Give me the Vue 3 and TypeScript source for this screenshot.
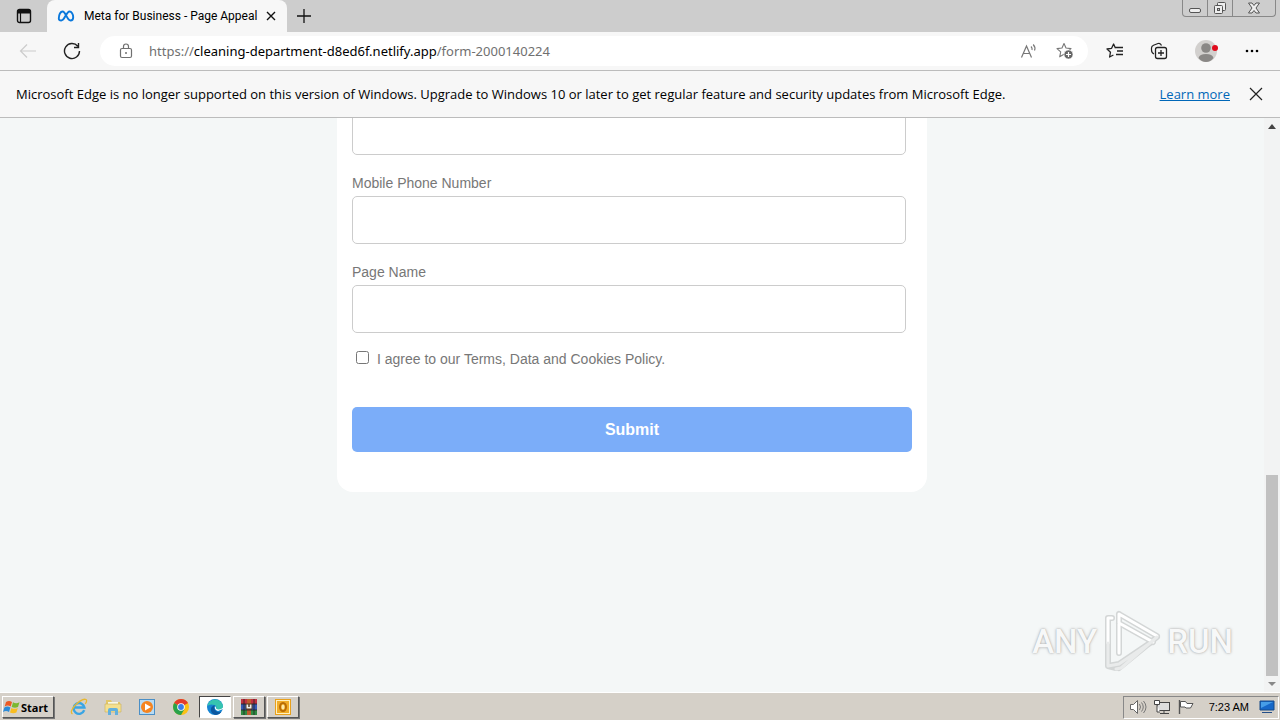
<script setup lang="ts">
import { ref } from 'vue'

interface Field {
  id: string
  label: string
}

const fields: Field[] = [
  { id: 'phone', label: 'Mobile Phone Number' },
  { id: 'page', label: 'Page Name' },
]
const values = ref<Record<string, string>>({ email: '', phone: '', page: '' })
const agreed = ref(false)
</script>

<template>
  <div class="screen">
    <header class="tabs">
      <button class="plain tab-actions" aria-label="Tab actions">
        <svg width="16" height="16" viewBox="0 0 16 16"><rect x="1.5" y="1.5" width="13" height="13" rx="2" fill="none" stroke="#111" stroke-width="1.4" /><path d="M1.5 2h13v3.500h-13z" fill="#111" /><path d="M4.500 5v9" stroke="#111" stroke-width="1.200" /></svg>
      </button>
      <div class="tab">
        <svg width="18" height="14" viewBox="0 0 18 14"><path d="M1.800 9.500C1.800 5.500 3.500 2.500 5.600 2.500 8.800 2.500 10 11.500 13.500 11.500c2 0 2.700-1.500 2.700-3.300 0-3.200-1.700-5.700-3.700-5.700C9.300 2.500 7.800 11.500 4.200 11.500c-1.600 0-2.400-.8-2.400-2z" fill="none" stroke="#0a78dc" stroke-width="1.900" /></svg>
        <span class="tab-title">Meta for Business - Page Appeal</span>
        <button class="plain" aria-label="Close tab">
          <svg width="12" height="12" viewBox="0 0 12 12"><path d="M2 2l8 8M10 2l-8 8" stroke="#111" stroke-width="1.400" /></svg>
        </button>
      </div>
      <button class="plain new-tab" aria-label="New tab">
        <svg width="16" height="16" viewBox="0 0 16 16"><path d="M8 1v14M1 8h14" stroke="#111" stroke-width="1.300" /></svg>
      </button>
      <div class="window-buttons">
        <button aria-label="Minimize"><svg width="14" height="14" viewBox="0 0 14 14"><rect x="1.500" y="7.500" width="11" height="4" rx="1.500" fill="#eee" stroke="#555" /></svg></button>
        <button aria-label="Restore"><svg width="14" height="14" viewBox="0 0 14 14"><rect x="4.500" y="1.500" width="8" height="8" rx="1" fill="#eee" stroke="#555" /><rect x="1.500" y="4.500" width="8" height="8" rx="1" fill="#eee" stroke="#555" /><rect x="4.500" y="7.500" width="2" height="2" fill="#ccc" stroke="#555" /></svg></button>
        <button class="wide" aria-label="Close"><svg width="14" height="12" viewBox="0 0 14 12"><path d="M1.500 1h3.500l2 2.500L9 1h3.500L9 6l3.500 5H9L7 8.500 5 11H1.500L5 6z" fill="#eee" stroke="#555" /></svg></button>
      </div>
    </header>

    <nav class="toolbar">
      <button class="plain" aria-label="Back"><svg width="18" height="16" viewBox="0 0 18 16"><path d="M17 8H2M8 1.500L1.500 8 8 14.500" fill="none" stroke="#ccc" stroke-width="1.200" /></svg></button>
      <button class="plain reload" aria-label="Refresh"><svg width="18" height="18" viewBox="0 0 18 18"><path d="M16.500 9A7.500 7.500 0 1 1 14.800 4.300M15.500 1v4.500H11" fill="none" stroke="#222" stroke-width="1.400" /></svg></button>
      <div class="address">
        <svg width="14" height="16" viewBox="0 0 14 16"><rect x="1.500" y="5.500" width="11" height="9" rx="1.500" fill="none" stroke="#707070" stroke-width="1.200" /><path d="M4.500 5.500V3.500a2.500 2.500 0 0 1 5 0v2" fill="none" stroke="#707070" stroke-width="1.200" /><circle cx="7" cy="10" r="1" fill="#707070" /></svg>
        <span class="url">https://<b>cleaning-department-d8ed6f.netlify.app</b>/form-2000140224</span>
        <button class="plain" aria-label="Read aloud"><svg width="18" height="16" viewBox="0 0 18 16"><path d="M1.500 14.500L6.500 3l5 11.500M3.300 10.500h6.400M11 3.500q1.500 1.500 1 3.500M13.200 1.500q2.700 3 1.300 6" fill="none" stroke="#777" stroke-width="1.200" /></svg></button>
        <button class="plain star" aria-label="Add to favorites"><svg width="18" height="18" viewBox="0 0 18 18"><path d="M8 1.500l2 4.500 5 .6-3.700 3.200 1 5L8 12.300l-4.300 2.500 1-5L1 6.600 6 6z" fill="none" stroke="#777" stroke-width="1.100" stroke-linejoin="round" /><circle cx="12.500" cy="12.500" r="4.500" fill="#666" stroke="#fff" stroke-width=".6" /><path d="M12.500 10v5M10 12.500h5" stroke="#fff" stroke-width="1.200" /></svg></button>
      </div>
      <div class="tools">
        <button class="plain" aria-label="Favorites"><svg width="18" height="18" viewBox="0 0 18 18"><path d="M9.500 6.300L7.600 2 5.600 6.300 1 7l3.500 3.200-.9 4.800 3.800-2M9 5.500h8M11 9h6M10 12.500h7" fill="none" stroke="#222" stroke-width="1.300" stroke-linejoin="round" /></svg></button>
        <button class="plain" aria-label="Collections"><svg width="18" height="18" viewBox="0 0 18 18"><path d="M4 12Q1.500 11 1.500 8V6Q1.500 4 3.500 3.200L8 1.500q2.500-.7 3.500 2" fill="none" stroke="#222" stroke-width="1.200" /><rect x="5.500" y="5.500" width="11" height="11" rx="2" fill="#f7f7f7" stroke="#222" stroke-width="1.300" /><path d="M11 8v6M8 11h6" stroke="#222" stroke-width="1.300" /></svg></button>
        <button class="plain" aria-label="Profile"><svg width="24" height="24" viewBox="0 0 24 24"><circle cx="12" cy="12" r="11" fill="#d2d0ce" /><circle cx="12" cy="9" r="4.800" fill="#8a8886" /><path d="M4.500 19q1-4 7.500-4t7.500 4q-3 4-7.500 4t-7.500-4z" fill="#8a8886" /><circle cx="21" cy="9" r="3" fill="#e00b1c" /></svg></button>
        <button class="plain" aria-label="Settings and more"><svg width="16" height="16" viewBox="0 0 16 16"><circle cx="3" cy="8" r="1.300" /><circle cx="8" cy="8" r="1.300" /><circle cx="13" cy="8" r="1.300" /></svg></button>
      </div>
    </nav>

    <section class="notice">
      <p>Microsoft Edge is no longer supported on this version of Windows. Upgrade to Windows 10 or later to get regular feature and security updates from Microsoft Edge.</p>
      <a href="#">Learn more</a>
      <button class="plain" aria-label="Dismiss"><svg width="14" height="14" viewBox="0 0 14 14"><path d="M1 1l12 12M13 1L1 13" stroke="#222" stroke-width="1.200" /></svg></button>
    </section>

    <div class="viewport">
      <main class="page">
        <form class="card" @submit.prevent>
          <input v-model="values.email" class="box" type="text" aria-label="Email" />
          <div v-for="f in fields" :key="f.id" class="field">
            <label :for="f.id">{{ f.label }}</label>
            <input :id="f.id" v-model="values[f.id]" class="box" type="text" />
          </div>
          <div class="agree">
            <input id="agree" v-model="agreed" type="checkbox" />
            <label for="agree">I agree to our Terms, Data and Cookies Policy.</label>
          </div>
          <button class="submit" type="submit">Submit</button>
        </form>
      </main>
      <div class="scrollbar">
        <svg width="16" height="16" viewBox="0 0 16 16"><path d="M4 11l4-5 4 5z" fill="#444" /></svg>
        <div class="track"><div class="thumb"></div></div>
        <svg width="16" height="16" viewBox="0 0 16 16"><path d="M4 6l4 4 4-4z" fill="#888" /></svg>
      </div>
      <div class="watermark">
        <span>ANY</span>
        <svg width="58" height="64" viewBox="0 0 58 64">
          <g fill="none" stroke-linejoin="round" stroke-linecap="round">
            <path d="M16 5v39M16 5l38 22M16 14l34 19M9 9H5v48l8 2M16 59L54 28M5 57l11-2 34-23" stroke="#d3d6d6" stroke-width="6" />
            <path d="M16 44V5l38 22M16 14l34 19M9 9H5v25" stroke="#fff" stroke-width="3" />
            <path d="M5 34v23l11-2 34-23M13 60l5-1 36-31" stroke="#e9ebeb" stroke-width="3" />
          </g>
        </svg>
        <span>RUN</span>
      </div>
    </div>

    <footer class="taskbar">
      <button class="start"><svg width="18" height="16" viewBox="0 0 18 16"><path d="M3 3q3-2 6 0L7.700 7.500q-3-2-6 0z" fill="#ec5a24" /><path d="M10 3.300q3 1.700 6.500 0L15 8q-3 1.600-6.300 0z" fill="#7bb830" /><path d="M1.400 8.500q3-2 6 0L6 13q-3-2-6 0z" fill="#2c8bd8" /><path d="M8.400 9q3 1.700 6.400 0l-1.400 4.500q-3 1.600-6.400 0z" fill="#f9bd20" /></svg>Start</button>
      <div class="launchers">
        <button class="task" aria-label="Internet Explorer"><svg width="18" height="18" viewBox="0 0 18 18"><path d="M14.200 12.200A5.400 5.400 0 1 1 14.400 9.500H5" fill="none" stroke="#3aa5e4" stroke-width="2.400" /><path d="M2.500 16Q-.5 14 4.500 8 12 0 16 1.500q1.500 1.200-.8 4.500" fill="none" stroke="#e8b830" stroke-width="1.300" /></svg></button>
        <button class="task" aria-label="File Explorer"><svg width="18" height="18" viewBox="0 0 18 18"><path d="M2 2h5l1 2h8v9H2z" fill="#e2c768" /><path d="M4 4h10v3H4z" fill="#f8f8e5" /><path d="M1 6h16v8H1z" fill="#f4e08f" stroke="#cbb05a" stroke-width=".6" /><path d="M4 17v-5q0-2 2-2h6q2 0 2 2v5h-3v-4H7v4z" fill="#62b0dd" /></svg></button>
        <button class="task" aria-label="Media Player"><svg width="18" height="18" viewBox="0 0 18 18"><rect x="1.500" y="1.500" width="15" height="15" fill="#b8dbf3" stroke="#4b8fc6" /><circle cx="9" cy="9" r="6" fill="#f58420" /><path d="M7 5.500l6 3.500-6 3.500z" fill="#fff" /></svg></button>
        <button class="task" aria-label="Chrome"><svg width="18" height="18" viewBox="0 0 18 18"><circle cx="9" cy="9" r="8" fill="#fbc116" /><path d="M9 9L2.100 5A8 8 0 0 1 16 5z" fill="#e33b2e" /><path d="M9 9L2.100 5A8 8 0 0 0 9 17l3.500-6z" fill="#29a24b" /><circle cx="9" cy="9" r="3.800" fill="#fff" /><circle cx="9" cy="9" r="2.900" fill="#3b7de9" /></svg></button>
        <button class="task active" aria-label="Edge"><svg width="18" height="18" viewBox="0 0 18 18"><circle cx="9" cy="9" r="8" fill="#1584d2" /><path d="M1.200 8A8 8 0 0 1 17 8.500Q17 12 13 12q-3 0-2.800-1.500Q11 8 8.500 7 4 5.500 1.200 8z" fill="#36c4b0" /><path d="M8.500 7Q4 9 5 13q1 3.500 5 3.900 4-.4 5.800-3.400-3 1.500-5.500-.2Q7.500 11.500 8.500 8.300z" fill="#0c579f" /><path d="M9 8Q8 12 12 13l5-2v-1.500Q15 12 12 11.500 9.500 11 10 9.500z" fill="#fff" /></svg></button>
        <button class="task raised" aria-label="WinRAR"><svg width="18" height="18" viewBox="0 0 18 18"><path d="M1 1h16v5H1z" fill="#c03040" /><path d="M1 6h16v6H1z" fill="#3559b6" /><path d="M1 12h16v5H1z" fill="#2f8a41" /><path d="M7 1h4v16H7z" fill="#be5b2d" /><path d="M6 6h6v5H6z" fill="#eee" stroke="#553c20" /><path d="M9 6v3" stroke="#553c20" stroke-width="1.500" /><path d="M4 1v16M14 1v16M1 6h5M12 6h5M1 12h16" stroke="#222" stroke-width=".8" /></svg></button>
        <button class="task raised" aria-label="Outlook"><svg width="18" height="18" viewBox="0 0 18 18"><rect x="1.500" y="1.500" width="15" height="15" fill="#fff0c0" stroke="#e8a01c" /><rect x="3" y="3" width="12" height="12" fill="#f0ac28" /><ellipse cx="9" cy="9" rx="3" ry="4" fill="none" stroke="#b96c05" stroke-width="2" /><ellipse cx="9" cy="9" rx="1.500" ry="2.500" fill="#ffe9a8" /></svg></button>
      </div>
      <div class="tray">
        <svg width="18" height="16" viewBox="0 0 18 16"><path d="M1.500 5.500h3l4-4v13l-4-4h-3z" fill="#fff" stroke="#666" /><path d="M10.500 5q2 3 0 6M12.500 3.500q3.500 4.500 0 9M14.500 2q5 6 0 12" fill="none" stroke="#777" /></svg>
        <svg width="18" height="16" viewBox="0 0 18 16"><rect x="4.500" y="3.500" width="12" height="8" fill="#ddd" stroke="#444" /><path d="M7 14.500h9M11 12v2" stroke="#444" /><path d="M1.500 1.500h5v4h-5zM4 5.500V13h3" fill="#fff" stroke="#444" /></svg>
        <svg width="18" height="16" viewBox="0 0 18 16"><path d="M2.500 1v14" stroke="#555" stroke-width="1.400" /><path d="M3.500 2.500h5l1.500 2h6l-2.500 4.500H9L8 8H3.500z" fill="#fff" stroke="#555" /></svg>
        <time>7:23 AM</time>
        <svg width="16" height="16" viewBox="0 0 16 16"><path d="M1 2h14v9H1z" fill="#1768c8" stroke="#174a88" /><path d="M2 3h12L2 9z" fill="#479ee7" /><path d="M3 13h10v1H3z" fill="#234e88" /></svg>
      </div>
    </footer>
  </div>
</template>

<style>
body {
  margin: 0;
}
</style>

<style scoped>
* {
  box-sizing: border-box;
}
.screen {
  display: flex;
  flex-direction: column;
  height: 100vh;
  overflow: hidden;
  font-family: "Noto Sans", "Open Sans", sans-serif;
  color: #000;
}
svg {
  display: block;
  flex: none;
}
.plain {
  padding: 0;
  border: 0;
  background: none;
  flex: none;
}
.tabs {
  display: flex;
  align-items: center;
  flex: none;
  height: 32px;
  background: #cdcdcd;
}
.tab-actions {
  margin: 0 15px 0 16px;
}
.tab {
  display: flex;
  align-items: center;
  align-self: stretch;
  width: 240px;
  padding: 0 10px;
  border-radius: 8px 8px 0 0;
  background: #f7f7f7;
}
.tab-title {
  flex: 1;
  margin-left: 9px;
  font-size: 12px;
  white-space: nowrap;
  font-family: Roboto, sans-serif;
}
.new-tab {
  margin-left: 9px;
}
.window-buttons {
  display: flex;
  align-self: flex-start;
  height: 17px;
  margin: 0 4px 0 auto;
  border: 1px solid #888;
  border-top: 0;
  border-radius: 0 0 4px 4px;
}
.window-buttons button {
  display: flex;
  align-items: center;
  justify-content: center;
  width: 25px;
  padding: 0;
  border: 0;
  border-right: 1px solid #888;
  background: none;
}
.window-buttons .wide {
  width: 42px;
  border-right: 0;
}
.toolbar {
  display: flex;
  align-items: center;
  flex: none;
  height: 39px;
  padding: 0 20px 0 19px;
  border-bottom: 1px solid #bcbcbc;
  background: #f7f7f7;
}
.reload {
  margin-left: 26px;
}
.address {
  display: flex;
  align-items: center;
  flex: 1;
  height: 30px;
  margin-left: 19px;
  padding: 0 14px 0 19px;
  border-radius: 15px;
  background: #fff;
}
.url {
  flex: 1;
  margin-left: 16px;
  font-size: 13px;
  color: #707070;
  white-space: nowrap;
}
.url b {
  font-weight: 400;
  color: #000;
}
.star {
  margin-left: 18px;
}
.tools {
  display: flex;
  align-items: center;
  gap: 26px;
  margin-left: 18px;
}
.notice {
  display: flex;
  align-items: center;
  flex: none;
  height: 47px;
  padding: 0 17px 0 16px;
  border-bottom: 1px solid #bcbcbc;
  background: #f7f7f7;
  font-family: "Open Sans", sans-serif;
  font-size: 13px;
  white-space: nowrap;
}
.notice p {
  flex: 1;
  margin: 0;
}
.notice a {
  margin-right: 19px;
  color: #0067b8;
}
.viewport {
  position: relative;
  display: flex;
  flex: 1;
  min-height: 0;
  background: #f4f7f7;
}
.page {
  flex: 1;
  overflow: hidden;
  font-family: "Liberation Sans", Arial, sans-serif;
}
.card {
  width: 590px;
  margin: -11px auto 0;
  padding: 0 15px 40px;
  border-radius: 0 0 16px 16px;
  background: #fff;
}
.box {
  display: block;
  width: calc(100% - 6px);
  height: 48px;
  padding: 0 12px;
  border: 1px solid #ccc;
  border-radius: 5px;
  background: #fff;
  font-size: 14px;
}
.field {
  padding-top: 20px;
}
.field label {
  display: block;
  height: 21px;
  font-size: 14px;
  line-height: 16px;
  color: #777;
}
.agree {
  display: flex;
  align-items: center;
  gap: 8px;
  margin-top: 16px;
  font-size: 14px;
  line-height: 20px;
  color: #777;
}
.agree input {
  width: 13px;
  height: 13px;
  margin: 0 0 4px 4px;
}
.submit {
  display: block;
  width: 100%;
  height: 45px;
  margin-top: 38px;
  border: 0;
  border-radius: 5px;
  background: #7badf9;
  color: #fff;
  font-family: inherit;
  font-size: 16px;
  font-weight: 700;
}
.scrollbar {
  display: flex;
  flex-direction: column;
  width: 16px;
  background: #f2f3f3;
}
.track {
  display: flex;
  flex-direction: column;
  justify-content: flex-end;
  flex: 1;
  padding: 0 2px;
}
.thumb {
  height: 37%;
  background: #c1c1c1;
}
.watermark {
  position: absolute;
  right: 47px;
  bottom: 19px;
  display: flex;
  align-items: center;
  gap: 6px;
  color: #f7f8f8;
  font-family: "Liberation Sans Narrow", Roboto, sans-serif;
  font-size: 33px;
  font-weight: 500;
  text-shadow: 0 0 3px #aaa, 0 0 1px #bbb;
}
.taskbar {
  display: flex;
  align-items: center;
  flex: none;
  height: 28px;
  padding: 2px 1px 1px 2px;
  border-top: 1px solid #fff;
  background: #d5d0c8;
}
.start,
.raised {
  border: 1px solid;
  border-color: #fff #555 #555 #fff;
  box-shadow: 1px 1px 0 #777;
}
.start {
  display: flex;
  align-items: center;
  width: 52px;
  height: 22px;
  padding: 0;
  background: #d5d0c8;
  font-family: "Noto Sans", sans-serif;
  font-size: 11px;
  font-weight: 700;
}
.launchers {
  display: flex;
  gap: 2px;
  margin-left: 9px;
}
.task {
  display: flex;
  align-items: center;
  justify-content: center;
  width: 32px;
  height: 22px;
  padding: 0;
  background: #d5d0c8;
}
.task:not(.raised):not(.active) {
  border: 0;
}
.active {
  border: 1px solid;
  border-color: #444 #fff #fff #444;
  background: #fff;
}
.tray {
  display: flex;
  align-items: center;
  gap: 6px;
  height: 23px;
  margin-left: auto;
  padding: 0 3px 0 5px;
  border: 1px solid;
  border-color: #888 #fff #fff #888;
  font-family: "Liberation Sans", Arial, sans-serif;
  font-size: 11px;
}
.tray time {
  margin: 0 4px 0 8px;
}
</style>
